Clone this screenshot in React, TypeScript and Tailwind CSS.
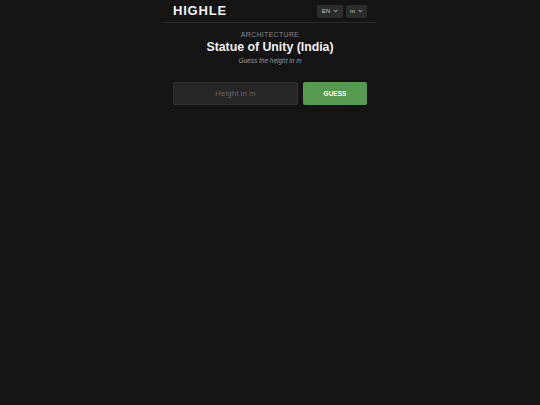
import React from "react";

export default function App() {
  return (
    <div className="min-h-[405px] w-full bg-[#141414] text-white" style={{ fontFamily: '"Liberation Sans", Arial, sans-serif' }}>
      <div className="mx-auto w-[212px]">
        <header className="flex h-[23px] items-center justify-between border-b border-[#2a2a2a] px-[9px]">
          <div className="text-[13px] font-bold tracking-[0.8px] text-[#f2f2f2]">HIGHLE</div>
          <div className="flex items-center gap-[3px]">
            <div className="flex h-[13px] w-[26px] items-center justify-center gap-[3px] rounded-[2px] bg-[#2c2c2c] text-[6px] text-[#c8c8c8]">
              <span>EN</span>
              <svg width="5" height="4" viewBox="0 0 5 4"><path d="M0.8 1 L2.5 2.8 L4.2 1" stroke="#c8c8c8" strokeWidth="0.9" fill="none" /></svg>
            </div>
            <div className="flex h-[13px] w-[21px] items-center justify-center gap-[3px] rounded-[2px] bg-[#2c2c2c] text-[6px] text-[#c8c8c8]">
              <span>m</span>
              <svg width="5" height="4" viewBox="0 0 5 4"><path d="M0.8 1 L2.5 2.8 L4.2 1" stroke="#c8c8c8" strokeWidth="0.9" fill="none" /></svg>
            </div>
          </div>
        </header>
        <div className="flex flex-col items-center pt-[7px]">
          <div className="text-[7px] leading-[9px] tracking-[0.3px] text-[#8a8a8a]">ARCHITECTURE</div>
          <div className="mt-[1px] text-[12.3px] font-bold leading-[15px] text-[#f0f0f0]">Statue of Unity (India)</div>
          <div className="mt-[2px] text-[6.5px] italic leading-[8px] text-[#9a9a9a]">Guess the height in m</div>
        </div>
        <div className="mt-[17px] flex gap-[5px] px-[9px]">
          <div className="flex h-[23px] w-[125px] items-center justify-center rounded-[2px] border border-[#333] bg-[#262626] text-[8px] text-[#666]">
            Height in m
          </div>
          <div className="flex h-[23px] flex-1 items-center justify-center rounded-[2px] bg-[#569a52] text-[6.5px] font-bold text-white">
            GUESS
          </div>
        </div>
      </div>
    </div>
  );
}
